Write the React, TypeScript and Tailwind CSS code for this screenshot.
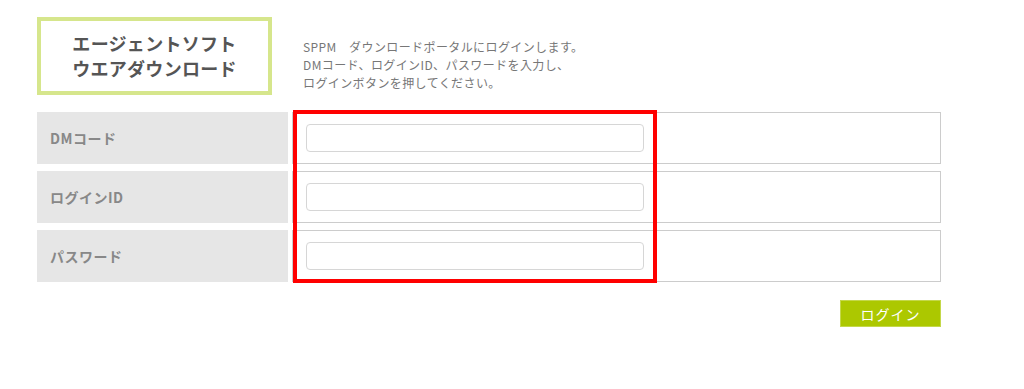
import React from "react";

const font = { fontFamily: '"Noto Sans CJK JP", "Noto Sans", sans-serif' };

function Row({ label, type = "text" }: { label: string; type?: string }) {
  return (
    <div className="flex h-[52px] gap-[4px]">
      <div className="w-[251px] shrink-0 bg-[#e6e6e6] flex items-center pl-[13px] text-[14px] tracking-[0.5px] font-bold text-[#888888]">
        {label}
      </div>
      <div className="flex-1 border border-[#cccccc] flex items-center pl-[13px]">
        <input
          type={type}
          className="w-[338px] h-[28px] border border-[#d6d6d6] rounded-[4px] bg-white outline-none"
        />
      </div>
    </div>
  );
}

export default function App() {
  return (
    <div className="w-[1024px] h-[389px] bg-white" style={font}>
      <div className="ml-[37px] w-[904px] pt-[17px]">
        <div className="flex">
          <div className="w-[235px] h-[78px] border-[4px] border-[#d6e68c] flex flex-col items-center justify-center text-[18px] tracking-[0.3px] leading-[25px] font-bold text-[#555555]">
            <div>エージェントソフト</div>
            <div>ウエアダウンロード</div>
          </div>
          <div className="ml-[31px] mt-[21px] text-[12px] tracking-[0.4px] leading-[18px] text-[#777777]">
            <div>SPPM　ダウンロードポータルにログインします。</div>
            <div>DMコード、ログインID、パスワードを入力し、</div>
            <div>ログインボタンを押してください。</div>
          </div>
        </div>
        <div className="relative mt-[17px] flex flex-col gap-[7px]">
          <Row label="DMコード" />
          <Row label="ログインID" />
          <Row label="パスワード" type="password" />
          <div className="absolute left-[256px] top-[-2px] w-[364px] h-[173px] border-[4px] border-[#ff0000] pointer-events-none" />
        </div>
        <div className="flex justify-end mt-[18px]">
          <button className="w-[101px] h-[27px] bg-[#acc800] border border-[#c4d84a] text-white text-[14px] tracking-[1px] leading-none">
            ログイン
          </button>
        </div>
      </div>
    </div>
  );
}
